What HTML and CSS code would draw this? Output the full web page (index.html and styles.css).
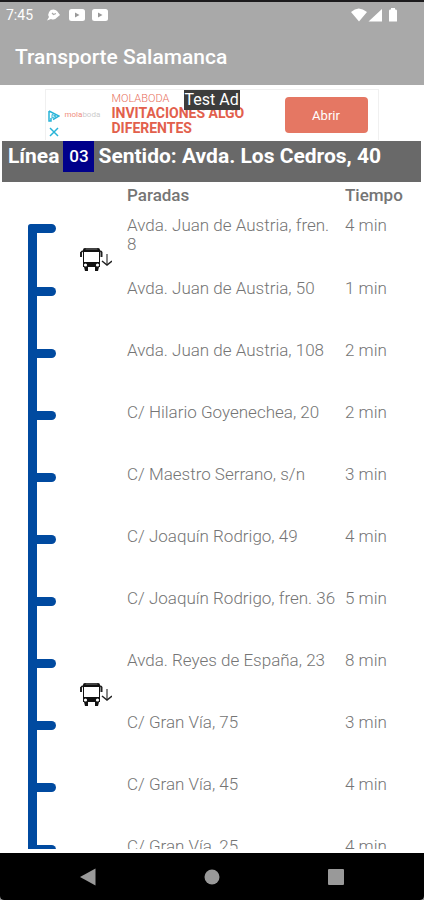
FILE: index.html
```
<!DOCTYPE html>
<html lang="es">
<head>
<meta charset="utf-8">
<meta name="viewport" content="width=device-width, initial-scale=1">
<title>Transporte Salamanca</title>
<link rel="stylesheet" href="styles.css">
</head>
<body>
<svg class="defs" aria-hidden="true">
  <symbol id="bus" viewBox="0 0 32 25">
    <path d="M3 3Q3 1 5 1H18Q20 1 20 3V20H3Z" fill="#111"/>
    <path d="M5.500 2H17.500" stroke="#777" stroke-width="1"/>
    <path d="M4 5H19V15H4Z" fill="#fff"/>
    <path d="M1 5V10M21.500 5V10" stroke="#222" stroke-width="2"/>
    <path d="M1 5L3 4M22 5L20 4" stroke="#222" stroke-width="1.500"/>
    <circle cx="5.500" cy="18" r="1.600" fill="#fff"/><circle cx="17.500" cy="18" r="1.600" fill="#fff"/>
    <path d="M4 20H8V24H5ZM15 20H19L18 24H15Z" fill="#111"/>
    <path d="M27 7V17" stroke="#888" stroke-width="2"/>
    <path d="M22 14L27 18L32 14" fill="none" stroke="#222" stroke-width="1.500"/>
  </symbol>
</svg>
<div class="screen">
  <header class="top">
    <div class="status">
      <span class="clock">7:45</span>
      <svg class="notice" width="16" height="14" viewBox="0 0 16 14" aria-hidden="true"><path d="M7.500 1.500A5 5 0 0 1 11 3L14 7L11 9.500A5 5 0 0 1 5 11L1 12.500L3 9A5 5 0 0 1 7.500 1.500Z" fill="#fff"/><path d="M6 5L7.500 6.500L10 5.500" fill="none" stroke="#a9a9a9" stroke-width="1.200"/></svg>
      <svg class="notice" width="16" height="12" viewBox="0 0 16 12" aria-hidden="true"><rect width="16" height="12" rx="2.500" fill="#fff"/><path d="M6 3.500L10.500 6L6 8.500Z" fill="#999"/></svg>
      <svg class="notice" width="16" height="12" viewBox="0 0 16 12" aria-hidden="true"><rect width="16" height="12" rx="2.500" fill="#fff"/><path d="M6 3.500L10.500 6L6 8.500Z" fill="#999"/></svg>
      <svg class="system" width="48" height="14" viewBox="0 0 48 14" aria-hidden="true"><path d="M1 4Q8.500 -3 17 4L9 13.500ZM32 1V13.500H18.500ZM40 1.500H41V0H45V1.500H46Q47 1.500 47 3V13.500H39V3Q39 1.500 40 1.500Z" fill="#fff"/></svg>
    </div>
    <h1 class="title">Transporte Salamanca</h1>
  </header>
  <main class="content">
    <aside class="ad">
      <div class="ad-marks">
        <svg width="12" height="12" viewBox="0 0 12 12" aria-hidden="true"><path d="M1 1L11 6L5 9.500M1 1V11H3V8" fill="none" stroke="#28b4d8" stroke-width="1.500"/><path d="M4 4.500L8 6L4 8Z" fill="none" stroke="#28b4d8"/></svg>
        <svg width="12" height="12" viewBox="0 0 12 12" aria-hidden="true"><path d="M2 2L10 10M10 2L2 10" stroke="#28b4d8" stroke-width="1.500"/></svg>
      </div>
      <span class="ad-logo">mola<span class="ad-logo-end">boda</span></span>
      <div class="ad-copy">
        <span class="ad-brand">MOLABODA</span>
        <strong class="ad-line">INVITACIONES ALGO DIFERENTES</strong>
      </div>
      <button class="ad-open" type="button">Abrir</button>
      <span class="ad-test">Test Ad</span>
    </aside>
    <h2 class="route"><span>Línea</span><span class="route-number">03</span><span>Sentido: Avda. Los Cedros, 40</span></h2>
    <div class="list">
      <table class="stops">
        <colgroup><col class="col-track"><col class="col-bus"><col><col class="col-time"></colgroup>
        <thead><tr><td></td><td></td><th scope="col">Paradas</th><th scope="col">Tiempo</th></tr></thead>
        <tbody>
          <tr><td class="track"></td><td class="bus"><svg role="img" aria-label="Autobús"><use href="#bus"/></svg></td><td>Avda. Juan de Austria, fren. 8</td><td>4 min</td></tr>
          <tr><td class="track"></td><td></td><td>Avda. Juan de Austria, 50</td><td>1 min</td></tr>
          <tr><td class="track"></td><td></td><td>Avda. Juan de Austria, 108</td><td>2 min</td></tr>
          <tr><td class="track"></td><td></td><td>C/ Hilario Goyenechea, 20</td><td>2 min</td></tr>
          <tr><td class="track"></td><td></td><td>C/ Maestro Serrano, s/n</td><td>3 min</td></tr>
          <tr><td class="track"></td><td></td><td>C/ Joaquín Rodrigo, 49</td><td>4 min</td></tr>
          <tr><td class="track"></td><td></td><td>C/ Joaquín Rodrigo, fren. 36</td><td>5 min</td></tr>
          <tr><td class="track"></td><td class="bus"><svg role="img" aria-label="Autobús"><use href="#bus"/></svg></td><td>Avda. Reyes de España, 23</td><td>8 min</td></tr>
          <tr><td class="track"></td><td></td><td>C/ Gran Vía, 75</td><td>3 min</td></tr>
          <tr><td class="track"></td><td></td><td>C/ Gran Vía, 45</td><td>4 min</td></tr>
          <tr><td class="track"></td><td></td><td>C/ Gran Vía, 25</td><td>4 min</td></tr>
        </tbody>
      </table>
    </div>
  </main>
  <nav class="keys">
    <button type="button" aria-label="Atrás"><svg width="18" height="18" viewBox="0 0 18 18"><path d="M1 9L16.500 0.500V17.500Z" fill="#999"/></svg></button>
    <button type="button" aria-label="Inicio"><svg width="18" height="18" viewBox="0 0 18 18"><circle cx="9" cy="9" r="7.500" fill="#999"/></svg></button>
    <button type="button" aria-label="Recientes"><svg width="18" height="18" viewBox="0 0 18 18"><rect x="1" y="1" width="16" height="16" rx="1" fill="#999"/></svg></button>
  </nav>
</div>
</body>
</html>
```
FILE: styles.css
```
* { box-sizing: border-box; }
body { margin: 0; background: #999; font-family: Roboto, "Liberation Sans", sans-serif; }
h1, h2 { margin: 0; }
button { border: 0; padding: 0; font-family: inherit; }
svg { display: block; }
.defs { display: none; }

.screen { display: flex; flex-direction: column; height: 100vh; overflow: hidden; background: #fff; border-radius: 0 0 4px 4px; }

.top { background: #a9a9a9; border-top: 2px solid #1c1b1d; color: #fff; }
.status { display: flex; align-items: center; height: 26px; padding: 0 26px 0 6px; }
.clock { width: 40px; font-size: 14px; }
.notice { margin-right: 7px; }
.system { margin-left: auto; }
.title { padding: 17px 15px 16px; font-size: 21px; line-height: 24px; font-weight: 500; }

.content { flex: 1; min-height: 0; display: flex; flex-direction: column; padding: 4px 3px 4px 2px; }

.ad { position: relative; align-self: center; display: flex; width: 334px; height: 51px; border: 1px solid #f0f0f0; border-bottom: 0; }
.ad-marks { display: flex; flex-direction: column; gap: 4px; padding: 20px 0 0 2px; }
.ad-logo { width: 52px; padding: 19px 0 0 5px; font-size: 8px; line-height: 12px; color: #ef8d7d; }
.ad-logo-end { color: #ccc; }
.ad-copy { display: flex; flex-direction: column; width: 173px; padding-top: 2px; }
.ad-brand { font-size: 11px; line-height: 14px; font-weight: 300; color: #e8705e; }
.ad-line { font-size: 14px; line-height: 15px; font-weight: 700; color: #e2604c; }
.ad-open { width: 83px; height: 36px; margin-top: 7px; border-radius: 4px; background: #e57763; color: #fff; font-size: 13px; }
.ad-test { position: absolute; left: 138px; top: 0; padding: 0 1px; background: #3c3c3c; color: #fff; font-size: 16px; line-height: 20px; }

.route { display: flex; gap: 4px; height: 41px; margin-top: 1px; padding-left: 6px; background: #696969; color: #fff; font-size: 21px; line-height: 31px; font-weight: 700; white-space: nowrap; }
.route-number { width: 31px; height: 31px; background: #00008b; font-size: 17px; font-weight: 500; text-align: center; }

.list { flex: 1; min-height: 0; overflow: hidden; }
.stops { width: 100%; table-layout: fixed; border-collapse: collapse; color: #757575; font-size: 17px; line-height: 19px; }
.col-track { width: 75px; }
.col-bus { width: 50px; }
.col-time { width: 76px; }
.stops th { height: 34px; padding: 4px 0 0; text-align: left; vertical-align: top; font-weight: 500; }
.stops thead td { padding: 0; }
.stops tbody td { height: 62px; padding: 0 4px 0 0; vertical-align: top; font-weight: 300; }
.stops tbody tr:first-child td { padding-bottom: 25px; }
.stops tbody .track {
  padding: 8px 0 0 26px;
  background: linear-gradient(#004aa0, #004aa0) 26px 0 / 9px 100% no-repeat;
}
.stops tbody tr:first-child .track { background-position: 26px 12px; }
.track::before { content: ""; display: block; width: 28px; height: 9px; border-radius: 0 5px 5px 0; background: #004aa0; }
tr:first-child .track::before { border-top-left-radius: 3px; }
.stops tbody .bus { padding: 31px 0 0 3px; }
.stops tbody tr:first-child .bus { padding-bottom: 0; }
.bus svg { width: 32px; height: 25px; }

.keys { display: flex; justify-content: center; gap: 106px; height: 47px; background: #000; }
.keys button { display: flex; align-items: center; background: none; }
```
